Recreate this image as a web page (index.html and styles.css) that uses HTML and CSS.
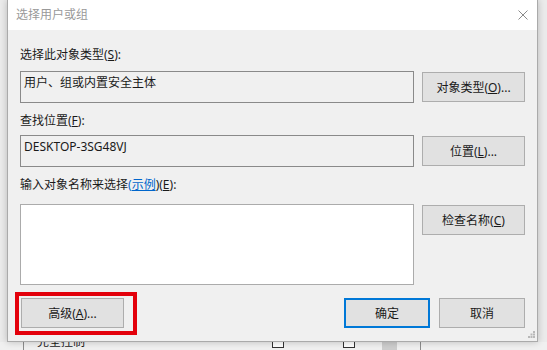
FILE: index.html
```html
<!DOCTYPE html>
<html lang="zh-CN">
<head>
    <meta charset="UTF-8">
    <title>选择用户或组</title>
    <link rel="stylesheet" href="styles.css">
</head>
<body>

    <div class="dialog">
        <div class="titlebar">
            <span class="title">选择用户或组</span>
            <svg class="close" width="10" height="10" viewBox="0 0 10 10">
                <path d="M0.5 0.5 L9.5 9.5 M9.5 0.5 L0.5 9.5" stroke="#8a8a8a" stroke-width="1" fill="none"/>
            </svg>
        </div>

        <div class="content">
            <!-- object type -->
            <div class="label">选择此对象类型(<u>S</u>):</div>
            <div class="row">
                <div class="field">用户、组或内置安全主体</div>
                <button class="btn">对象类型(<u>O</u>)...</button>
            </div>

            <!-- location -->
            <div class="label label-gap">查找位置(<u>F</u>):</div>
            <div class="row">
                <div class="field">DESKTOP-3SG48VJ</div>
                <button class="btn">位置(<u>L</u>)...</button>
            </div>

            <!-- names -->
            <div class="label label-gap">输入对象名称来选择<span class="link">(<u>示例</u></span>)(<u>E</u>):</div>
            <div class="row row-top">
                <div class="field field-area"></div>
                <button class="btn btn-check">检查名称(<u>C</u>)</button>
            </div>

            <div class="actions">
                <span class="marked">
                    <button class="btn">高级(<u>A</u>)...</button>
                </span>
                <span class="spacer"></span>
                <button class="btn btn-small btn-default">确定</button>
                <button class="btn btn-small">取消</button>
            </div>
        </div>

        <svg class="grip" width="7" height="7" viewBox="0 0 7 7">
            <rect x="5" y="0" width="2" height="2" fill="#b8b8b8"/>
            <rect x="2.5" y="2.5" width="2" height="2" fill="#b8b8b8"/>
            <rect x="5" y="2.5" width="2" height="2" fill="#b8b8b8"/>
            <rect x="0" y="5" width="2" height="2" fill="#b8b8b8"/>
            <rect x="2.5" y="5" width="2" height="2" fill="#b8b8b8"/>
            <rect x="5" y="5" width="2" height="2" fill="#b8b8b8"/>
        </svg>
    </div>

    <!-- the permissions dialog behind -->
    <div class="behind">
        <span class="vline vline-first"></span>
        <span class="perm">完全控制</span>
        <span class="check check-allow"></span>
        <span class="check check-deny"></span>
        <span class="scroll-thumb"></span>
        <span class="vline vline-last"></span>
    </div>

</body>
</html>
```

FILE: styles.css
```css
html, body {
    margin: 0;
    padding: 0;
}
body {
    width: 547px;
    height: 350px;
    overflow: hidden;
    background-color: #ebebeb;
    font-family: "Segoe UI", "Noto Sans", "Noto Sans CJK SC", sans-serif;
    font-size: 12px;
    color: #1a1a1a;
}

/* the dialog window */
.dialog {
    position: relative;
    z-index: 1;
    box-sizing: border-box;
    width: 531px;
    height: 342px;
    margin-left: 7px;
    background-color: #f0f0f0;
    border: 1px solid #aaaaaa;
    border-top: none;
    box-shadow: 0 0 7px rgba(0, 0, 0, 0.22);
}
.titlebar {
    display: flex;
    align-items: center;
    justify-content: space-between;
    height: 30px;
    padding: 0 9px 0 8px;
    background-color: #fff;
}
.title {
    color: #999;
    line-height: 16px;
}
.content {
    padding: 17px 12px 0 12px;
}

.label {
    line-height: 16px;
    margin-bottom: 8px;
}
.label-gap {
    margin-top: 10px;
    margin-bottom: 6px;
}
.link {
    color: #0066cc;
}

.row {
    display: flex;
    align-items: center;
    gap: 8px;
}
.row-top {
    align-items: flex-start;
    margin-top: 11px;
}

.field {
    box-sizing: border-box;
    width: 394px;
    height: 32px;
    padding: 3px 3px 0 3px;
    line-height: 16px;
    border: 1px solid #8a8a8a;
    background-color: #f0f0f0;
}
.field-area {
    height: 81px;
    background-color: #fff;
    border-color: #ababab;
}

/* buttons */
.btn {
    box-sizing: border-box;
    width: 103px;
    height: 30px;
    padding: 0;
    font-family: inherit;
    font-size: 12px;
    color: #1a1a1a;
    background-color: #e1e1e1;
    border: 1px solid #adadad;
    border-radius: 0;
}
.btn-check {
    margin-top: 1px;
}
.btn-small {
    width: 86px;
}
.btn-default {
    border: 2px solid #0078d7;
}

.actions {
    display: flex;
    align-items: center;
    gap: 9px;
    margin-top: 13px;
}
.spacer {
    flex: 1;
}
.marked {
    position: relative;
    display: flex;
    margin-left: 1px;
}
/* red annotation box */
.marked::after {
    content: "";
    position: absolute;
    left: -6px;
    top: -6px;
    right: -13px;
    bottom: -7px;
    border: 4px solid #e3000b;
}

.grip {
    position: absolute;
    right: 2px;
    bottom: 3px;
}

/* strip of the window underneath */
.behind {
    display: flex;
    height: 8px;
    overflow: hidden;
    background-color: #f0f0f0;
}
.vline {
    width: 1px;
    height: 8px;
    background-color: #8c8c8c;
}
.vline-first {
    margin-left: 23px;
}
.perm {
    margin-left: 13px;
    margin-top: -8px;
    line-height: 16px;
    color: #1a1a1a;
}
.check {
    box-sizing: border-box;
    width: 12px;
    height: 14px;
    margin-top: -8px;
    border: 1px solid #333;
    background-color: #fff;
}
.check-allow {
    margin-left: 187px;
}
.check-deny {
    margin-left: 59px;
}
.scroll-thumb {
    width: 15px;
    height: 8px;
    margin-left: 27px;
    background-color: #cdcdcd;
}
.vline-last {
    margin-left: 23px;
}
```
